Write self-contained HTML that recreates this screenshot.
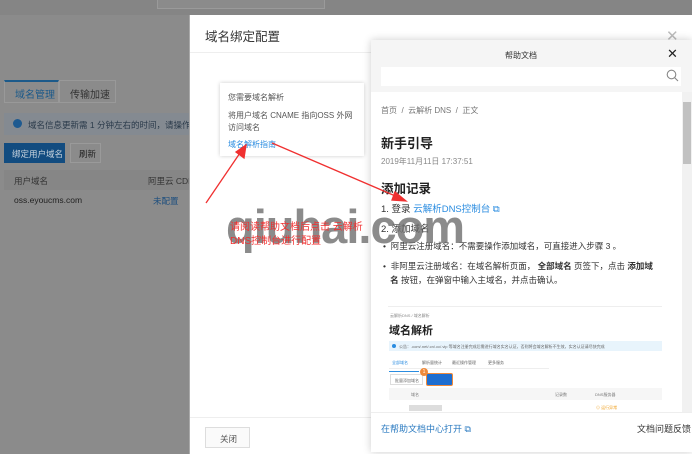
<!DOCTYPE html>
<html><head><meta charset="utf-8"><style>
*{margin:0;padding:0;box-sizing:border-box}
body{width:692px;height:454px;overflow:hidden;position:relative;background:#8b8b8b;font-family:"Liberation Sans","Noto Sans CJK SC",sans-serif;font-size:9px;color:#333}
.a{position:absolute}
</style></head><body>
<div class="a" style="left:0;top:0;width:692px;height:15px;background:#858585"></div>
<div class="a" style="left:157px;top:-4px;width:168px;height:13px;border:1px solid #9a9a9a;background:#8b8b8b"></div>
<div class="a" style="left:4px;top:80px;width:55px;height:23px;border:1px solid #999;border-top:2px solid #1c5a8a;color:#1c5a8a;font-size:10px;padding:4px 0 0 10px">域名管理</div>
<div class="a" style="left:59px;top:80px;width:57px;height:23px;border:1px solid #999;color:#333;font-size:10px;padding:5px 0 0 10px">传输加速</div>
<div class="a" style="left:4px;top:113px;width:186px;height:22px;background:#848a91;color:#2a3a4a;font-size:8.5px;padding:6px 0 0 24px;white-space:nowrap;overflow:hidden">域名信息更新需 1 分钟左右的时间，请操作后手动</div>
<div class="a" style="left:13px;top:119px;width:9px;height:9px;border-radius:50%;background:#1e5a90"></div>
<div class="a" style="left:4px;top:143px;width:61px;height:20px;background:#124c80;color:#c9d4de;font-size:8.5px;padding:5px 0 0 8px">绑定用户域名</div>
<div class="a" style="left:70px;top:143px;width:31px;height:20px;border:1px solid #9a9a9a;font-size:8.5px;padding:4px 0 0 8px;color:#222">刷新</div>
<div class="a" style="left:4px;top:170px;width:186px;height:20px;background:#868686;color:#333;font-size:8.5px;padding:5px 0 0 10px;white-space:nowrap">用户域名<span style="position:absolute;left:144px">阿里云 CDN</span></div>
<div class="a" style="left:14px;top:195px;font-size:8.5px;color:#222">oss.eyoucms.com</div>
<div class="a" style="left:153px;top:195px;font-size:8.5px;color:#1c4e7e">未配置</div>
<div class="a" style="left:189px;top:15px;width:503px;height:439px;background:#fff;border-left:1px solid #aaa"></div>
<div class="a" style="left:205px;top:26px;font-size:12.5px;color:#333">域名绑定配置</div>
<div class="a" style="left:190px;top:52px;width:502px;height:1px;background:#eee"></div>
<div class="a" style="left:666px;top:27px;font-size:15px;color:#bbb">✕</div>
<div class="a" style="left:190px;top:417px;width:502px;height:1px;background:#eee"></div>
<div class="a" style="left:205px;top:427px;width:45px;height:21px;border:1px solid #ddd;background:#fafafa;font-size:8.5px;color:#555;padding:5px 0 0 14px">关闭</div>
<div class="a" style="left:220px;top:83px;width:144px;height:73px;background:#fff;box-shadow:0 0 4px rgba(0,0,0,.2);font-size:8px;color:#555;padding:9px 8px">
<div>您需要域名解析</div><div style="margin-top:7px;line-height:12px">将用户域名 CNAME 指向OSS 外网访问域名</div><div style="margin-top:5px;color:#2a8ce0">域名解析指南</div></div>
<div class="a" style="left:371px;top:40px;width:321px;height:412px;background:#f5f5f5;box-shadow:0 0 8px rgba(0,0,0,.2)"></div>
<div class="a" style="left:505px;top:50px;font-size:8px;color:#333">帮助文档</div>
<div class="a" style="left:667px;top:46px;font-size:13px;color:#222">✕</div>
<div class="a" style="left:381px;top:67px;width:300px;height:19px;background:#fff"></div>
<svg class="a" style="left:666px;top:69px" width="13" height="13"><circle cx="5.5" cy="5.5" r="4.3" fill="none" stroke="#888" stroke-width="1.1"/><line x1="8.6" y1="8.6" x2="12" y2="12" stroke="#888" stroke-width="1.1"/></svg>
<div class="a" style="left:371px;top:92px;width:311px;height:321px;background:#fff"></div>
<div class="a" style="left:682px;top:92px;width:10px;height:321px;background:#f1f1f1"></div>
<div class="a" style="left:683px;top:102px;width:8px;height:62px;background:#c1c1c1"></div>
<div class="a" style="left:381px;top:105px;font-size:8px;color:#777">首页 &nbsp;/ &nbsp;云解析 DNS &nbsp;/ &nbsp;正文</div>
<div class="a" style="left:381px;top:133px;font-size:13px;font-weight:bold;color:#222">新手引导</div>
<div class="a" style="left:381px;top:156px;font-size:8px;color:#888">2019年11月11日 17:37:51</div>
<div class="a" style="left:381px;top:178px;font-size:12.5px;font-weight:bold;color:#222">添加记录</div>
<div class="a" style="left:381px;top:201px;font-size:9.5px;color:#333">1. 登录 <span style="color:#2a8ce0">云解析DNS控制台 ⧉</span></div>
<div class="a" style="left:381px;top:221px;font-size:9.5px;color:#333">2. 添加域名</div>
<div class="a" style="left:383px;top:240px;font-size:8.5px;color:#333">•&nbsp; 阿里云注册域名：不需要操作添加域名，可直接进入步骤 3 。</div>
<div class="a" style="left:383px;top:259px;width:300px;font-size:8.5px;color:#333;line-height:14px">•&nbsp; 非阿里云注册域名：在域名解析页面， <b>全部域名</b> 页签下，点击 <b>添加域<br>&nbsp;&nbsp;&nbsp;名</b> 按钮，在弹窗中输入主域名，并点击确认。</div>
<div class="a" style="left:388px;top:306px;width:274px;height:1px;background:#eee"></div>
<div class="a" style="left:390px;top:313px;font-size:4px;color:#888">云解析DNS / 域名解析</div>
<div class="a" style="left:389px;top:322px;font-size:11px;font-weight:bold;color:#222">域名解析</div>
<div class="a" style="left:389px;top:341px;width:273px;height:10px;background:#e8f4fc;font-size:4px;color:#666;padding:3px 0 0 10px;white-space:nowrap;overflow:hidden">公告：.com/.net/.cn/.cc/.vip 等域名注册完成后需进行域名实名认证，否则将会域名解析不生效，实名认证请尽快完成</div>
<div class="a" style="left:392px;top:344px;width:4px;height:4px;border-radius:50%;background:#2a8ce0"></div>
<div class="a" style="left:389px;top:355px;width:160px;height:14px;border-bottom:1px solid #eee;font-size:4px;color:#666;white-space:nowrap"><span style="display:inline-block;width:30px;padding:5px 3px;border-bottom:1px solid #2a8ce0;color:#2a8ce0">全部域名</span><span style="display:inline-block;width:30px;padding:5px 3px">解析量统计</span><span style="display:inline-block;width:36px;padding:5px 3px">最近操作管理</span><span style="display:inline-block;padding:5px 3px">更多服务</span></div>
<div class="a" style="left:390px;top:374px;width:33px;height:11px;border:1px solid #ddd;font-size:4px;color:#666;padding:3px 0 0 4px">批量添加域名</div>
<div class="a" style="left:426px;top:373px;width:27px;height:13px;border:1.5px solid #f08a3a;border-radius:2px;background:#1e6ed0"></div>
<div class="a" style="left:420px;top:368px;width:8px;height:8px;border-radius:50%;background:#f08a3a;color:#fff;font-size:5px;text-align:center;line-height:8px">1</div>
<div class="a" style="left:389px;top:388px;width:273px;height:12px;background:#f6f6f6;font-size:4px;color:#777"><span style="position:absolute;left:22px;top:4px">域名</span><span style="position:absolute;left:166px;top:4px">记录数</span><span style="position:absolute;left:206px;top:4px">DNS服务器</span></div>
<div class="a" style="left:409px;top:405px;width:33px;height:6px;background:#ddd"></div>
<div class="a" style="top:405px;font-size:4px;color:#f0a020;left:596px">⊙ 运行异常</div>
<div class="a" style="left:371px;top:412px;width:321px;height:40px;background:#fff;border-top:1px solid #eee"></div>
<div class="a" style="left:381px;top:422px;font-size:9px;color:#2a7ac0">在帮助文档中心打开 ⧉</div>
<div class="a" style="left:637px;top:422px;font-size:9px;color:#333">文档问题反馈</div>
<div class="a" style="left:226px;top:199px;font-size:47px;font-weight:bold;color:rgba(110,110,110,.8);letter-spacing:-1px;white-space:nowrap;z-index:5">qiuhai.com</div>
<div class="a" style="left:230px;top:221px;font-size:10px;color:#f03030;line-height:14px;z-index:6">请阅读帮助文档后点击 云解析<br>DNS控制台进行配置</div>
<svg class="a" style="left:0;top:0;z-index:7" width="692" height="454"><g stroke="#f03030" stroke-width="1.3" fill="#f03030">
<line x1="206" y1="203" x2="242" y2="150"/><polygon points="246,145 236,152 244,158"/>
<line x1="272" y1="143" x2="400" y2="198"/><polygon points="406,201 395,192 392,200"/></g></svg>
</body></html>
